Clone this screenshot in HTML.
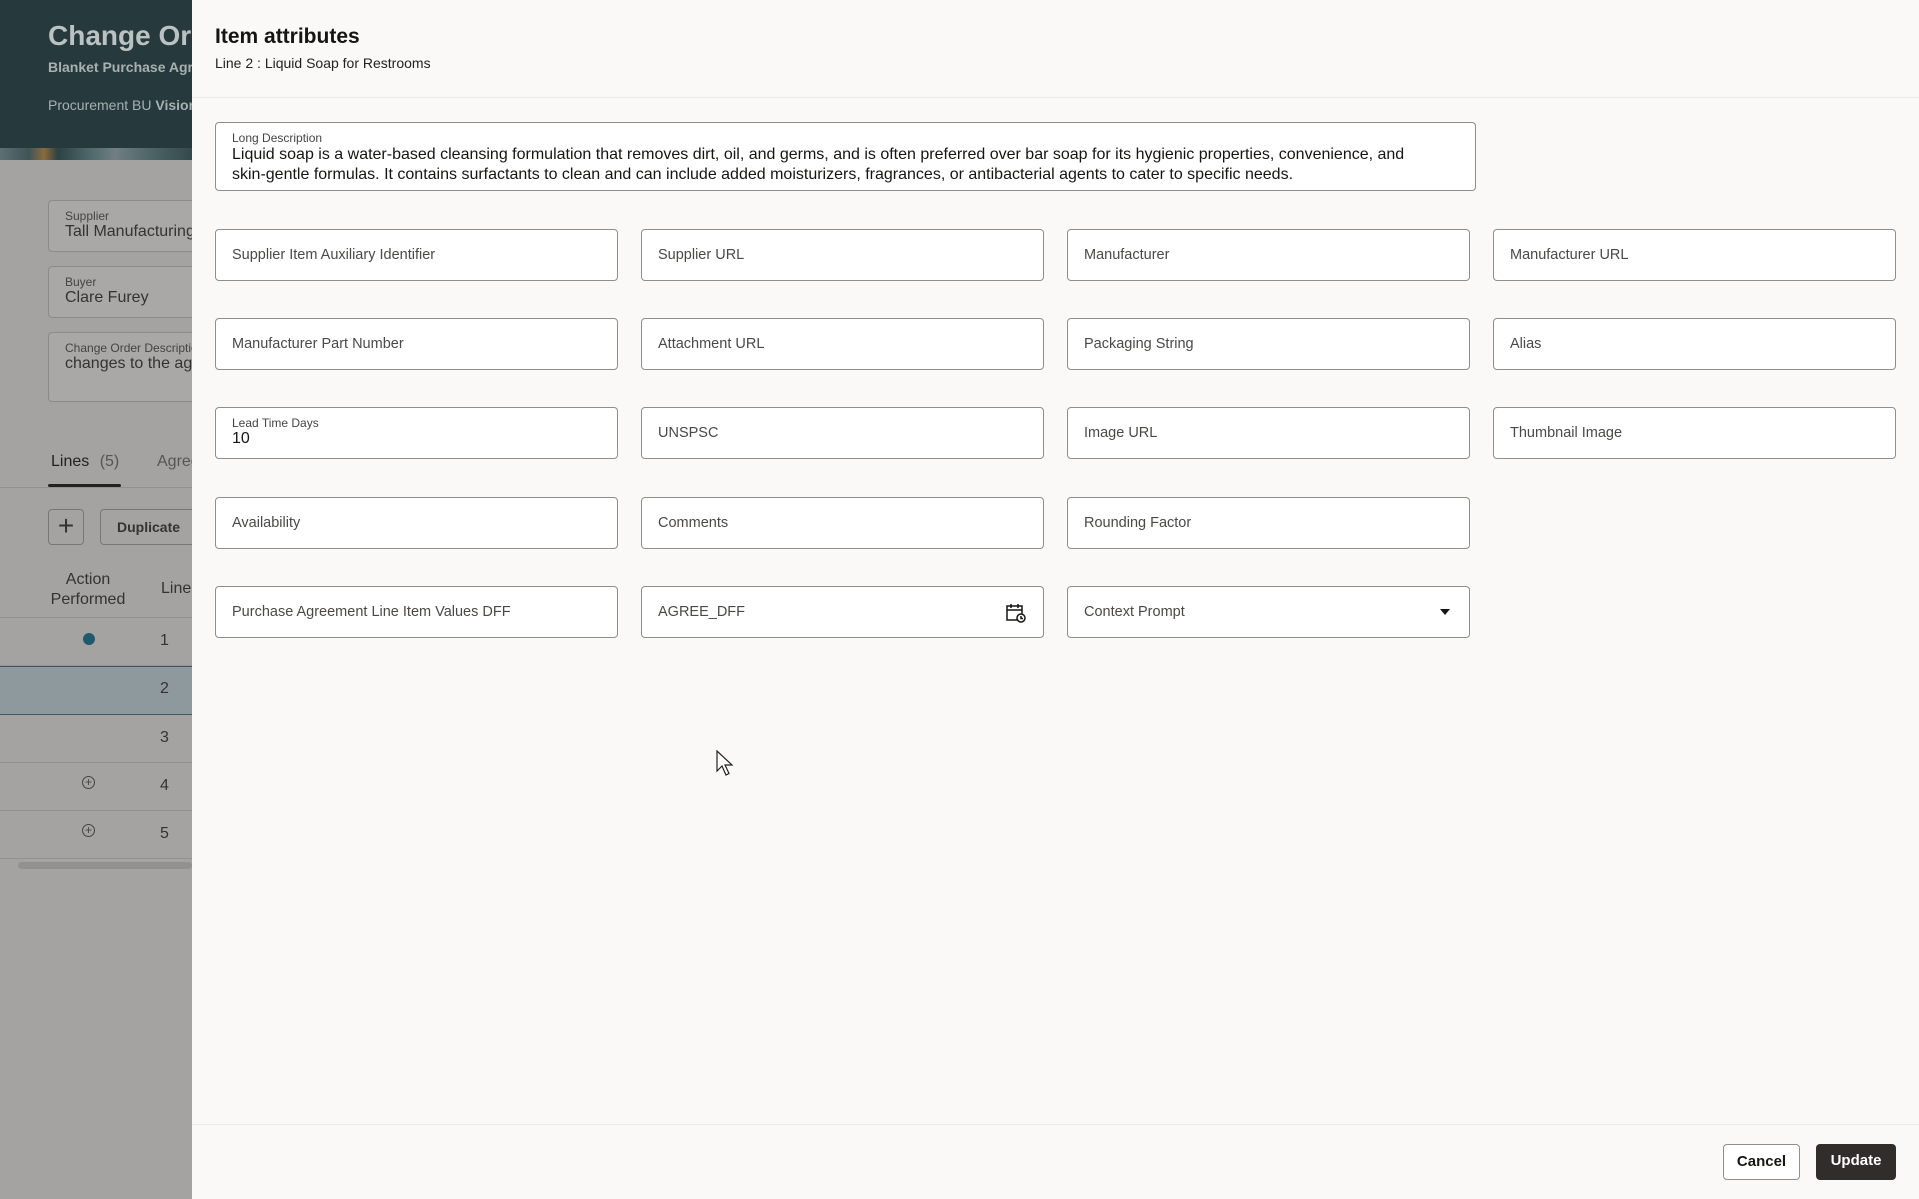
<!DOCTYPE html><html><head><style>
*{box-sizing:border-box;margin:0;padding:0}
body{width:1919px;height:1199px;position:relative;overflow:hidden;font-family:"Liberation Sans",sans-serif;background:#a5a3a1}
.a{position:absolute}
.lb{position:absolute;left:48px;width:160px;border:1px solid #8c8a88;border-radius:4px;background:#aaa8a6;padding:8px 16px;color:#333;white-space:nowrap;overflow:hidden}
.lb small{display:block;font-size:12px;color:#444}
.lb span{font-size:16px}
.row{position:absolute;left:0;width:192px;border-bottom:1px solid #929090}
.num{position:absolute;left:160px;font-size:16px;color:#333}
#d{position:absolute;left:192px;top:0;width:1727px;height:1199px;background:#faf9f8}
.f{position:absolute;width:403px;height:52px;border:1px solid #8f8e8c;border-radius:4px;background:#fff;font-size:14.5px;color:#4a4947;padding:0 0 0 16px;line-height:50px}
.btn{position:absolute;top:1144px;height:36px;border-radius:4px;font-size:15px;font-weight:bold;text-align:center;line-height:34px}
</style></head><body>
<div class="a" style="left:0;top:0;width:192px;height:148px;background:#263a3d"></div>
<div class="a" style="left:0;top:148px;width:192px;height:12px;background:linear-gradient(90deg,#5d6f72 0,#3e5558 15%,#8a6a3a 23%,#2c4244 30%,#4a6467 45%,#6f7f83 60%,#4b6366 80%,#34494c 100%)"></div>
<div class="a" style="left:48px;top:20px;font-size:28px;font-weight:bold;color:#bcc2c2;white-space:nowrap">Change Order</div>
<div class="a" style="left:48px;top:59px;font-size:14px;font-weight:bold;color:#a8b0b0;white-space:nowrap">Blanket Purchase Agreement</div>
<div class="a" style="left:48px;top:97px;font-size:14px;color:#a8b0b0;white-space:nowrap">Procurement BU <b>Vision</b></div>
<div class="lb" style="top:200px;height:52px"><small>Supplier</small><span>Tall Manufacturing</span></div>
<div class="lb" style="top:266px;height:52px"><small>Buyer</small><span>Clare Furey</span></div>
<div class="lb" style="top:332px;height:70px"><small>Change Order Description</small><span>changes to the agreement</span></div>
<div class="a" style="left:51px;top:453px;font-size:16px;color:#222">Lines <span style="color:#555;margin-left:6px">(5)</span></div>
<div class="a" style="left:157px;top:453px;font-size:16px;color:#555">Agreement</div>
<div class="a" style="left:48px;top:484px;width:73px;height:3px;background:#222;border-radius:2px"></div>
<div class="a" style="left:0;top:487px;width:192px;height:1px;background:#929090"></div>
<div class="a" style="left:48px;top:509px;width:36px;height:36px;border:1px solid #777;border-radius:4px;font-size:28px;line-height:32px;text-align:center;color:#333">+</div>
<div class="a" style="left:100px;top:509px;width:100px;height:36px;border:1px solid #777;border-radius:4px;font-size:14px;line-height:34px;padding-left:16px;color:#333;font-weight:bold">Duplicate</div>
<div class="a" style="left:40px;top:570px;width:96px;font-size:16px;color:#333;text-align:center;line-height:20px">Action Performed</div>
<div class="a" style="left:161px;top:580px;font-size:16px;color:#333">Line</div>
<div class="row" style="top:617px;height:1px"></div>
<div class="row" style="top:618px;height:48px"></div><div class="a" style="left:83px;top:633px;width:12px;height:12px;border-radius:50%;background:#1e5a6e"></div><div class="num" style="top:632px">1</div>
<div class="a" style="left:0;top:666px;width:192px;height:49px;background:#8e999e;border-top:1px solid #3f5a63;border-bottom:1px solid #3f5a63"></div><div class="num" style="top:680px">2</div>
<div class="row" style="top:715px;height:48px"></div><div class="num" style="top:729px">3</div>
<div class="row" style="top:763px;height:48px"></div><div class="a" style="left:82px;top:776px;width:13px;height:13px;border:1px solid #444;border-radius:50%;font-size:12px;line-height:11px;text-align:center;color:#444">+</div><div class="num" style="top:777px">4</div>
<div class="row" style="top:811px;height:48px"></div><div class="a" style="left:82px;top:824px;width:13px;height:13px;border:1px solid #444;border-radius:50%;font-size:12px;line-height:11px;text-align:center;color:#444">+</div><div class="num" style="top:825px">5</div>
<div class="a" style="left:18px;top:862px;width:174px;height:7px;border-radius:4px;background:#939190"></div>

<div id="d">
<div class="a" style="left:23px;top:25px;font-size:21px;font-weight:bold;color:#161513">Item attributes</div>
<div class="a" style="left:23px;top:55px;font-size:14px;color:#222">Line 2 : Liquid Soap for Restrooms</div>
<div class="a" style="left:0;top:97px;width:1727px;height:1px;background:#eceae8"></div>
<div class="a" style="left:23px;top:122px;width:1261px;height:69px;border:1px solid #8f8e8c;border-radius:4px;background:#fff;padding:8px 40px 0 16px">
<div style="font-size:12px;color:#444">Long Description</div>
<div style="font-size:16px;color:#161513;line-height:20px">Liquid soap is a water-based cleansing formulation that removes dirt, oil, and germs, and is often preferred over bar soap for its hygienic properties, convenience, and skin-gentle formulas. It contains surfactants to clean and can include added moisturizers, fragrances, or antibacterial agents to cater to specific needs.</div></div>

<div class="f" style="left:23px;top:229px">Supplier Item Auxiliary Identifier</div>
<div class="f" style="left:449px;top:229px">Supplier URL</div>
<div class="f" style="left:875px;top:229px">Manufacturer</div>
<div class="f" style="left:1301px;top:229px">Manufacturer URL</div>
<div class="f" style="left:23px;top:318px">Manufacturer Part Number</div>
<div class="f" style="left:449px;top:318px">Attachment URL</div>
<div class="f" style="left:875px;top:318px">Packaging String</div>
<div class="f" style="left:1301px;top:318px">Alias</div>
<div class="f" style="left:23px;top:407px;line-height:normal;padding-top:8px"><div style="font-size:12px;color:#444">Lead Time Days</div><div style="font-size:16px;color:#161513">10</div></div>
<div class="f" style="left:449px;top:407px">UNSPSC</div>
<div class="f" style="left:875px;top:407px">Image URL</div>
<div class="f" style="left:1301px;top:407px">Thumbnail Image</div>
<div class="f" style="left:23px;top:497px">Availability</div>
<div class="f" style="left:449px;top:497px">Comments</div>
<div class="f" style="left:875px;top:497px">Rounding Factor</div>
<div class="f" style="left:23px;top:586px">Purchase Agreement Line Item Values DFF</div>
<div class="f" style="left:449px;top:586px">AGREE_DFF
<svg class="a" style="left:364px;top:16px" width="20" height="20" viewBox="0 0 20 20" fill="none" stroke="#161513" stroke-width="1.5"><rect x="1" y="3" width="15" height="14"/><path d="M1 7h15M5 1v4M12 1v4"/><circle cx="15" cy="15" r="4" fill="#fff"/><path d="M15 13v2.5h2"/></svg></div>
<div class="f" style="left:875px;top:586px">Context Prompt<div class="a" style="left:372px;top:22px;width:0;height:0;border-left:5px solid transparent;border-right:5px solid transparent;border-top:6px solid #161513"></div></div>

<svg class="a" style="left:524px;top:750px" width="20" height="28" viewBox="0 0 20 28"><path d="M1 1v20l5-5 4 9 3-1.5-4-8.5h7z" fill="#fff" stroke="#222" stroke-width="1.2"/></svg>

<div class="a" style="left:0;top:1124px;width:1727px;height:1px;background:#eceae8"></div>
<div class="btn" style="left:1531px;width:77px;border:1px solid #8f8e8c;background:#fff;color:#161513">Cancel</div>
<div class="btn" style="left:1624px;width:80px;background:#312d2a;color:#fff">Update</div>
</div>
</body></html>
